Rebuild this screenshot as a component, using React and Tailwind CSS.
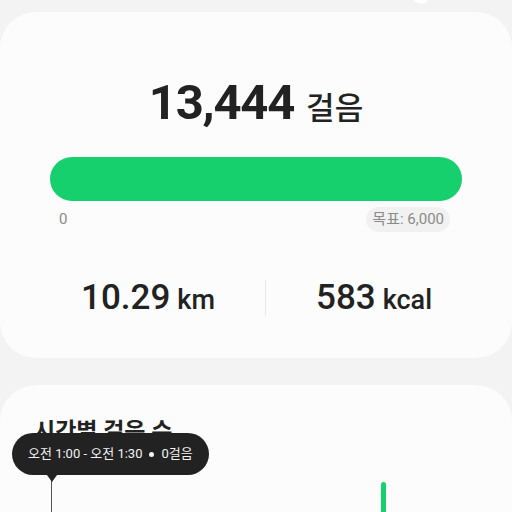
const font = { fontFamily: 'Roboto, "Noto Sans CJK KR", sans-serif' };

const StepsCard = () => (
  <div className="mt-3 h-[346px] rounded-[36px] bg-[#fcfcfc] px-[50px] pt-[66px]">
    <div className="flex items-baseline justify-center gap-3 text-[#222]">
      <span className="text-[49px] font-bold leading-none tracking-tight">13,444</span>
      <span className="text-[31px] font-medium leading-none">걸음</span>
    </div>
    <div className="mt-[30px] h-[44px] rounded-full bg-[#16d06e]" />
    <div className="mt-[6px] flex items-center justify-between pl-[9px] pr-[12px] text-[15px] text-[#8a8a8a]">
      <span>0</span>
      <span className="rounded-full bg-[#f1f1f1] px-[6px] py-[1px]">목표: 6,000</span>
    </div>
    <div className="mt-[48px] flex items-center">
      <div className="flex w-[215px] items-baseline gap-[7px] pl-[31px] text-[#222]">
        <span className="text-[35px] font-medium leading-none">10.29</span>
        <span className="text-[27px] font-medium leading-none">km</span>
      </div>
      <div className="h-[36px] w-px bg-[#e8e8e8]" />
      <div className="flex flex-1 items-baseline gap-[7px] pl-[50px] text-[#222]">
        <span className="text-[35px] font-medium leading-none">583</span>
        <span className="text-[27px] font-medium leading-none">kcal</span>
      </div>
    </div>
  </div>
);

const HourlyCard = () => (
  <div className="relative mt-[27px] h-[200px] rounded-[36px] bg-[#fcfcfc] px-[34px] pt-[30px]">
    <h2 className="text-[23px] font-bold text-[#222]">시간별 걸음 수</h2>
    <div className="absolute left-[51px] top-[90px] h-[60px] w-px bg-[#555]" />
    <div className="absolute left-[381px] top-[97px] h-[60px] w-[5px] rounded-full bg-[#16d06e]" />
    <div className="absolute left-[12px] top-[48px]">
      <div className="flex h-[42px] items-center rounded-full bg-[#222] px-[16px] text-[13px] text-[#f2f2f2]">
        오전 1:00 - 오전 1:30
        <span className="mx-[7px] h-[5px] w-[5px] rounded-full bg-[#f2f2f2]" />
        0걸음
      </div>
      <div className="ml-[35px] h-0 w-0 border-x-[5px] border-t-[7px] border-x-transparent border-t-[#222]" />
    </div>
  </div>
);

export default function App() {
  return (
    <div className="relative h-[512px] w-[512px] overflow-hidden bg-[#f3f3f3]" style={font}>
      <div className="absolute left-[412px] top-[-14px] h-[18px] w-[18px] rounded-full bg-white" />
      <StepsCard />
      <HourlyCard />
    </div>
  );
}
